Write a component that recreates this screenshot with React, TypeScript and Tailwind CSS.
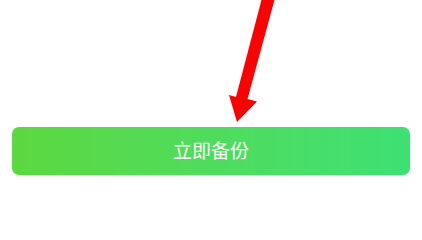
import React from 'react';

// Pointer arrow drawn over the page, aimed at the backup button
const PointerArrow: React.FC = () => (
  <svg
    className="absolute left-0 top-0 pointer-events-none"
    width="422"
    height="130"
    viewBox="0 0 422 130"
  >
    <polygon
      points="262,-2 275,-2 247.5,99 257,101.5 237,122 229,95 236,97"
      fill="#ff0000"
    />
  </svg>
);

const App: React.FC = () => {
  return (
    <div
      className="relative w-[422px] h-[202px] bg-white overflow-hidden"
      style={{ fontFamily: '"Noto Sans", "Noto Sans CJK SC", sans-serif' }}
    >
      <div className="pt-[127px] px-3">
        <button className="w-full h-12 rounded-[7px] bg-gradient-to-r from-[#5cd83f] to-[#3ee074] text-white text-[19px] flex items-center justify-center">
          立即备份
        </button>
      </div>
      <PointerArrow />
    </div>
  );
};

export default App;
